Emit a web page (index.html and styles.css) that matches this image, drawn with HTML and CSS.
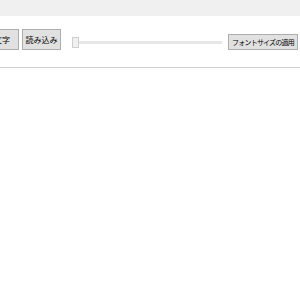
FILE: index.html
```html
<!DOCTYPE html>
<html lang="ja">
<head>
    <meta charset="UTF-8">
    <title>フォント設定</title>
    <link rel="stylesheet" href="styles.css">
</head>
<body>
    <div class="titlebar"></div>
    <div class="toolbar">
        <button class="btn btn-save">文字</button>
        <button class="btn btn-load">読み込み</button>
        <div class="slider">
            <div class="thumb"></div>
            <div class="track"></div>
        </div>
        <button class="btn btn-apply">フォントサイズの適用</button>
    </div>
    <div class="divider"></div>
    <div class="content"></div>
</body>
</html>
```
FILE: styles.css
```css
body {
    margin: 0;
    background: white;
    font-family: "Noto Sans CJK JP", "Noto Sans", sans-serif;
    overflow: hidden;
}

.titlebar {
    height: 16px;
    background: #f0f0f0;
}

.toolbar {
    display: flex;
    align-items: flex-start;
    height: 50px;
    padding-top: 13px;
    margin-left: -29px;
    box-sizing: border-box;
}

.btn {
    background: #e1e1e1;
    border: 1px solid #adadad;
    color: #000;
    font-family: inherit;
    font-size: 8px;
    padding: 0;
    margin: 0;
    box-sizing: border-box;
    white-space: nowrap;
}

.btn-save {
    width: 48px;
    height: 21px;
    text-align: right;
    padding-right: 8px;
}

.btn-load {
    width: 39px;
    height: 21px;
    margin-left: 3px;
}

.slider {
    display: flex;
    align-items: center;
    width: 150px;
    height: 11px;
    margin-left: 11px;
    margin-top: 8px;
}

.thumb {
    width: 7px;
    height: 11px;
    background: #f0f0f0;
    border: 1px solid #cfcfcf;
    box-sizing: border-box;
}

.track {
    flex: 1;
    height: 3px;
    background: #e7e7e7;
    border-top: 1px solid #e7e7e7;
    box-sizing: border-box;
}

.btn-apply {
    width: 70px;
    height: 16px;
    margin-left: 6px;
    margin-top: 5px;
    font-size: 7px;
    letter-spacing: -0.8px;
}

.divider {
    height: 1px;
    background: #d0d0d0;
    margin-top: 1px;
}
```
